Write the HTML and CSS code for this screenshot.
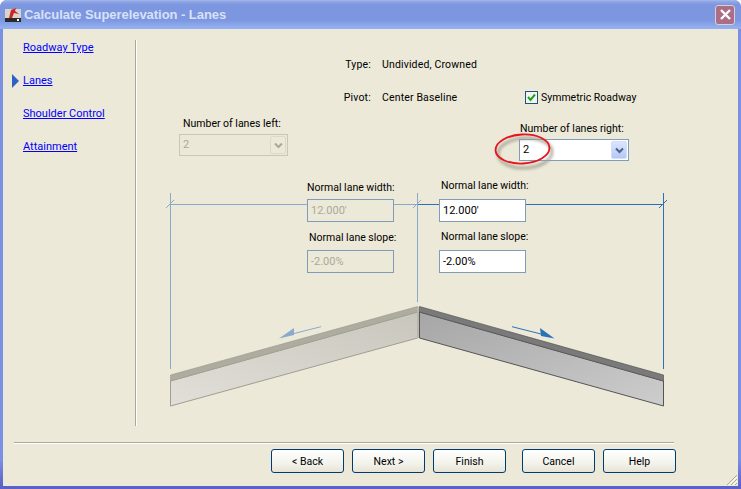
FILE: index.html
```html
<!DOCTYPE html>
<html lang="en">
<head>
<meta charset="utf-8">
<title>Calculate Superelevation - Lanes</title>
<link rel="stylesheet" href="styles.css">
</head>
<body>
<div class="window">
  <header class="titlebar">
    <svg class="app-icon" width="16" height="16" viewBox="0 0 16 16">
      <rect x="0" y="2" width="16" height="12" fill="#d8d4cc"/>
      <rect x="0" y="11" width="16" height="4" fill="#2a2a2a"/>
      <path d="M4 11 L6 3 L11 1 L10 4 L14 7 L9 6 L7 11 Z" fill="#c8262a"/>
      <rect x="12" y="12" width="2" height="2" fill="#fff"/>
    </svg>
    <span class="title">Calculate Superelevation - Lanes</span>
    <button class="close" type="button" aria-label="Close">
      <svg width="13" height="13" viewBox="0 0 13 13"><path d="M2 2 L11 11 M11 2 L2 11" stroke="#fff" stroke-width="2.4" fill="none"/></svg>
    </button>
  </header>
  <div class="client">
    <div class="main">
      <nav class="steps">
        <a class="step" href="#">Roadway Type</a>
        <a class="step current" href="#">Lanes</a>
        <a class="step" href="#">Shoulder Control</a>
        <a class="step" href="#">Attainment</a>
      </nav>
      <section class="content">
        <div class="info">
          <span class="info-label">Type:</span><span class="info-value">Undivided, Crowned</span><span></span>
          <span class="info-label">Pivot:</span><span class="info-value">Center Baseline</span>
          <label class="check">
            <span class="checkbox"><svg width="11" height="11" viewBox="0 0 11 11"><path d="M2 5 L4.5 8 L9 2.5" stroke="#21a121" stroke-width="2" fill="none"/></svg></span>
            Symmetric Roadway
          </label>
        </div>
        <div class="lanes">
          <div class="lane-left">
            <div class="lane-label">Number of lanes left:</div>
            <div class="combo disabled"><span class="combo-value">2</span>
              <span class="combo-btn"><svg width="9" height="7" viewBox="0 0 9 7"><path d="M1 1.5 L4.5 5 L8 1.5" stroke="#aca899" stroke-width="2" fill="none"/></svg></span>
            </div>
          </div>
          <div class="lane-right">
            <div class="lane-label">Number of lanes right:</div>
            <div class="combo"><span class="combo-value">2</span>
              <span class="combo-btn"><svg width="9" height="7" viewBox="0 0 9 7"><path d="M1 1.5 L4.5 5 L8 1.5" stroke="#4d6185" stroke-width="2" fill="none"/></svg></span>
            </div>
            <svg class="callout" width="70" height="44" viewBox="0 0 70 44">
              <defs><filter id="soft" x="-20%" y="-30%" width="140%" height="160%"><feGaussianBlur stdDeviation="1.6"/></filter></defs>
              <ellipse cx="31" cy="21" rx="27" ry="15" transform="rotate(-3 31 21)" fill="none" stroke="#a09e92" stroke-width="2.4" filter="url(#soft)"/>
              <ellipse cx="28.5" cy="17" rx="27" ry="14.5" transform="rotate(-3 28.5 17)" fill="none" stroke="#e8141c" stroke-width="1.8"/>
            </svg>
          </div>
        </div>
        <div class="diagram">
          <svg class="drawing" width="601" height="261" viewBox="137 165 601 261">
            <defs>
              <linearGradient id="bodyL" x1="0" y1="1" x2="1" y2="0"><stop offset="0" stop-color="#e2dfd8"/><stop offset="1" stop-color="#c9c6be"/></linearGradient>
              <linearGradient id="bodyR" x1="0" y1="0" x2="1" y2="1"><stop offset="0" stop-color="#a6a6a6"/><stop offset="1" stop-color="#cdcdcd"/></linearGradient>
            </defs>
            <g fill="none" stroke-width="1" shape-rendering="crispEdges">
              <path d="M170.5 193 V369 M417.5 193 V302 M170 204.5 H307 M394 204.5 H417" stroke="#8aa9cc"/>
              <path d="M663.5 193 V369 M418 204.5 H439 M526 204.5 H663" stroke="#2a72b8"/>
            </g>
            <path d="M166 208 L174 200 M413 208 L421 200" stroke="#8aa9cc" fill="none"/>
            <path d="M659 208 L667 200" stroke="#2a72b8" fill="none"/>
            <polygon points="170.5,381 417.5,312 417.5,338 170.5,406" fill="url(#bodyL)" stroke="#a09d94"/>
            <polygon points="170.5,375 417.5,306.5 417.5,312 170.5,381" fill="#adac9f" stroke="#a09d94" stroke-width=".7"/>
            <polygon points="419.5,312 663.5,381 663.5,406 419.5,338" fill="url(#bodyR)" stroke="#555"/>
            <polygon points="419.5,306.5 663.5,375 663.5,381 419.5,312" fill="#7a7a7a" stroke="#555" stroke-width=".7"/>
            <rect x="417" y="307" width="2" height="31" fill="#b9b6ac"/>
            <path d="M321 326.7 L292 334" stroke="#8aa9cc" fill="none"/>
            <polygon points="279,338.5 294,328 294,335" fill="#8aa9cc"/>
            <path d="M512 326.7 L541 334" stroke="#2a72b8" fill="none"/>
            <polygon points="554.5,338.5 540,328 541,336" fill="#2a72b8"/>
          </svg>
          <div class="dim-label w-left">Normal lane width:</div>
          <div class="dim-field off f-w-left">12.000'</div>
          <div class="dim-label s-left">Normal lane slope:</div>
          <div class="dim-field off f-s-left">-2.00%</div>
          <div class="dim-label w-right">Normal lane width:</div>
          <div class="dim-field f-w-right">12.000'</div>
          <div class="dim-label s-right">Normal lane slope:</div>
          <div class="dim-field f-s-right">-2.00%</div>
        </div>
      </section>
    </div>
    <footer class="footer">
      <div class="rule"></div>
      <div class="buttons">
        <button class="btn" type="button">&lt; Back</button>
        <button class="btn" type="button">Next &gt;</button>
        <button class="btn" type="button">Finish</button>
        <button class="btn gap" type="button">Cancel</button>
        <button class="btn" type="button">Help</button>
      </div>
    </footer>
    <svg class="grip" width="14" height="14" viewBox="0 0 14 14">
      <path d="M13 3 L3 13 M13 7 L7 13 M13 11 L11 13" stroke="#aca899" fill="none"/>
      <path d="M13 5 L5 13 M13 9 L9 13" stroke="#fff" fill="none"/>
    </svg>
  </div>
</div>
</body>
</html>
```
FILE: styles.css
```css
* { box-sizing: border-box; }
html, body { margin: 0; padding: 0; height: 100%; background: #fff; }
body { font: 10.5px/16px Roboto, "Liberation Sans", sans-serif; color: #000; overflow: hidden; }
.window {
  height: 489px; width: 741px; display: flex; flex-direction: column;
  border-radius: 7px 7px 0 0; overflow: hidden;
  background: linear-gradient(#7b8fe3 460px, #5a62c8 486px);
}
.titlebar {
  height: 29px; flex: none; display: flex; align-items: center; padding: 0 6px 0 5px;
  background: linear-gradient(#a6b9ec 0, #8ca3e4 2px, #7c96df 5px, #7c96df 20px, #8eabee 26px, #94b1f2 29px);
}
.app-icon { flex: none; margin-right: 3px; }
.title {
  flex: 1; font: bold 13px/16px "Liberation Sans", sans-serif; letter-spacing: -.05px; color: #d8e1f8;
}
.close {
  width: 20px; height: 20px; padding: 0; flex: none; display: flex; align-items: center; justify-content: center;
  border: 1px solid #d9cfd8; border-radius: 3px; background: #ac6e86;
}
.client {
  flex: 1; position: relative; display: flex; flex-direction: column;
  margin: 0 3px 3px; background: #ece9d8;
}
.main { flex: none; height: 413px; display: flex; padding-top: 11px; }
.steps {
  width: 134px; flex: none; height: 386px; padding: 0 0 0 20px; font-size: 11px;
  border-right: 1px solid #fff; box-shadow: inset -1px 0 0 #aca899;
  display: flex; flex-direction: column; align-items: flex-start; gap: 17px;
}
.step { color: #0000ff; text-decoration: underline; line-height: 16px; position: relative; }
.current::before {
  content: ""; position: absolute; left: -11px; top: 1px;
  border-left: 7px solid #2b62c4; border-top: 7px solid transparent; border-bottom: 7px solid transparent;
}
.content { flex: 1; min-width: 0; display: flex; flex-direction: column; }
.info {
  display: grid; grid-template-columns: 34px 132px auto; column-gap: 11px; row-gap: 17px;
  margin: 17px 0 0 200px;
}
.info-label { text-align: right; letter-spacing: .2px; }
.info-value { letter-spacing: .15px; white-space: nowrap; }
.check { display: flex; align-items: center; gap: 3px; margin-top: -1px; }
.checkbox {
  width: 13px; height: 13px; flex: none; border: 1px solid #1c5180; background: #f4f4ee;
  display: flex; align-items: center; justify-content: center;
}
.lanes { display: flex; gap: 231px; margin-left: 42px; height: 59px; }
.lane-left { width: 109px; padding-top: 10px; }
.lane-right { width: 110px; padding-top: 15px; position: relative; }
.lane-left .lane-label { padding-left: 4px; }
.lane-right .lane-label { padding-left: 1px; }
.lane-label { height: 16px; margin-bottom: 2px; white-space: nowrap; }
.combo {
  height: 22px; display: flex; align-items: center; justify-content: space-between;
  border: 1px solid #7f9db9; background: #fff; padding: 1px;
}
.combo-value { padding-left: 2px; font-size: 11px; }
.combo-btn {
  width: 16px; height: 18px; display: flex; align-items: center; justify-content: center;
  background: linear-gradient(#dbe5fd, #b4c8f6); border: 1px solid #d2dffb; border-radius: 2px;
}
.combo.disabled { background: #ebe8d8; border-color: #c9c7ba; color: #aca899; }
.combo.disabled .combo-btn { background: #ece9d8; border-color: #dcd9c8; }
.callout { position: absolute; left: -25px; top: 26px; pointer-events: none; }
.diagram { position: relative; flex: 1; }
.drawing { position: absolute; left: 0; top: 0; }
.dim-label { position: absolute; white-space: nowrap; }
.dim-field {
  position: absolute; width: 87px; height: 23px; border: 1px solid #7f9db9; background: #fff;
  padding-left: 3px; font-size: 11px; line-height: 21px;
}
.dim-field.off { background: #ece9d8; color: #aca899; }
.w-left { left: 170px; top: 15px; }
.s-left { left: 172px; top: 65px; }
.w-right { left: 304px; top: 13px; }
.s-right { left: 304px; top: 64px; }
.f-w-left { left: 170px; top: 34px; }
.f-s-left { left: 170px; top: 85px; }
.f-w-right { left: 302px; top: 34px; }
.f-s-right { left: 302px; top: 85px; }
.footer { flex: none; margin-left: 11px; }
.rule { width: 660px; height: 2px; border-top: 1px solid #aca899; border-bottom: 1px solid #fff; }
.buttons { display: flex; gap: 8px; justify-content: flex-end; width: 662px; margin-top: 5px; }
.btn {
  width: 73px; height: 24px; padding: 1px 0 0; font: inherit; color: #000;
  border: 1px solid #003c74; border-radius: 3px;
  background: linear-gradient(#fff, #f3f3ec 60%, #e6e3d6);
}
.gap { margin-left: 8px; }
.grip { position: absolute; right: 0; bottom: 0; }
```
